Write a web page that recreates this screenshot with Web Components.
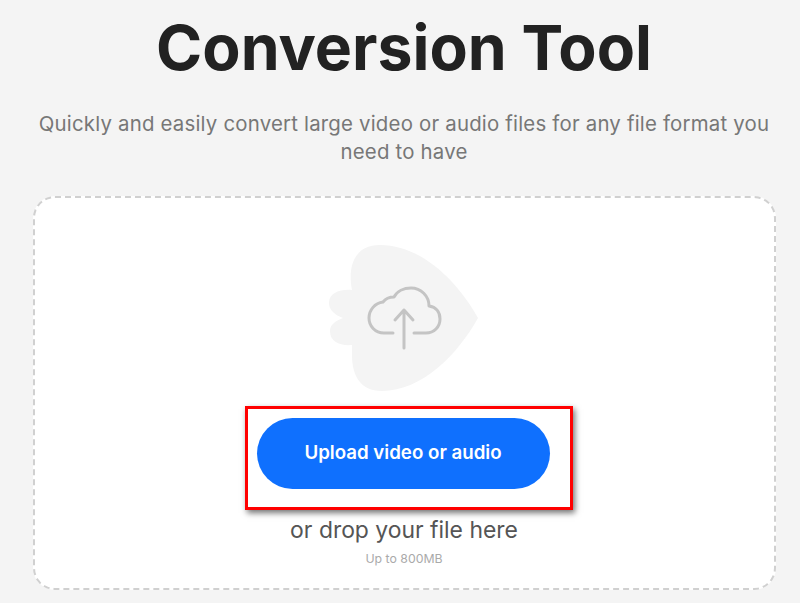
<!DOCTYPE html>
<html>
<head>
<meta charset="utf-8">
<style>
  html, body { margin: 0; height: 603px; overflow: hidden; background: #f4f4f4; }
  body { font-family: Inter, "Liberation Sans", sans-serif; }
</style>
</head>
<body>
<conversion-page>
  <page-heading title="Conversion Tool">Quickly and easily convert large video or audio files for any file format you need to have</page-heading>
  <drop-zone hint="or drop your file here" limit="Up to 800MB">
    <upload-art></upload-art>
    <upload-button>Upload video or audio</upload-button>
  </drop-zone>
</conversion-page>
<script>
class ConversionPage extends HTMLElement {
  constructor() {
    super();
    this.attachShadow({ mode: 'open' });
    this.shadowRoot.innerHTML = `
      <style>
        :host { display: flex; flex-direction: column; align-items: center; box-sizing: border-box; height: 603px; padding-left: 8px; overflow: hidden; }
      </style>
      <slot></slot>
    `;
  }
}

class PageHeading extends HTMLElement {
  constructor() {
    super();
    this.attachShadow({ mode: 'open' });
    this.shadowRoot.innerHTML = `
      <style>
        :host { display: block; width: 760px; text-align: center; }
        h1 { margin: 0; padding-top: 8px; font-size: 62.5px; line-height: 78px; font-weight: 700; color: #222; }
        p { margin: 24px 0 0; font-size: 20.4px; line-height: 28px; height: 86px; color: #777; letter-spacing: 0.2px; }
      </style>
      <h1></h1>
      <p><slot></slot></p>
    `;
    this.shadowRoot.querySelector('h1').textContent = this.getAttribute('title');
  }
}

class DropZone extends HTMLElement {
  constructor() {
    super();
    this.attachShadow({ mode: 'open' });
    this.shadowRoot.innerHTML = `
      <style>
        :host { display: flex; flex-direction: column; align-items: center; box-sizing: border-box; width: 743px; height: 394px; background: #fff; border: 2px dashed #d0d0d0; border-radius: 22px; padding-top: 32px; }
        .hint { margin-top: 7px; font-size: 22.9px; line-height: 27px; color: #555; }
        .limit { margin-top: 7px; font-size: 12.3px; line-height: 15px; color: #aaa; }
      </style>
      <slot></slot>
      <div class="hint"></div>
      <div class="limit"></div>
    `;
    this.shadowRoot.querySelector('.hint').textContent = this.getAttribute('hint');
    this.shadowRoot.querySelector('.limit').textContent = this.getAttribute('limit');
  }
}

class UploadArt extends HTMLElement {
  constructor() {
    super();
    this.attachShadow({ mode: 'open' });
    this.shadowRoot.innerHTML = `
      <style>
        :host { display: block; width: 190px; height: 176px; margin-left: 1px; }
        svg { display: block; }
      </style>
      <svg width="190" height="170" viewBox="0 0 190 170" fill="none">
        <path fill="#f4f4f4" d="M70,15 C112,15 148,52 168,88 C148,124 112,161 72,161 C50,161 42,145 42,125 L42,115 C30,116 20,112 20,101 C20,95 25,91 33,88 C25,85 19,80 19,73 C19,63 30,59 42,60 C38,40 42,15 70,15 Z"/>
        <path stroke="#c4c4c4" stroke-width="3" stroke-linecap="round" stroke-linejoin="round" d="M83,103 H74 C65,103 59,96 59,88 C59,80 65,73 73,72 C76,68 80,67 84,67 C87,61 94,58 101,58 C111,58 119,66 119,76 C126,77 130,82 130,89 C130,97 124,103 116,103 H104"/>
        <path stroke="#c4c4c4" stroke-width="3" stroke-linecap="round" stroke-linejoin="round" d="M94,118 V80 M85,90 L94,80 L103,90"/>
      </svg>
    `;
  }
}

class UploadButton extends HTMLElement {
  constructor() {
    super();
    this.attachShadow({ mode: 'open' });
    this.shadowRoot.innerHTML = `
      <style>
        :host { display: block; box-sizing: border-box; width: 328px; height: 104px; margin-left: 10px; padding: 9px 20px 0 9px; border: 3px solid #f00; box-shadow: 2px 3px 6px rgba(0,0,0,.55); }
        button { display: block; width: 293px; height: 71px; border: 0; border-radius: 36px; background: #0f70fe; color: #fff; font: 600 18.7px Inter, "Liberation Sans", sans-serif; padding: 0 1px 2px 0; }
      </style>
      <button><slot></slot></button>
    `;
  }
}

customElements.define('conversion-page', ConversionPage);
customElements.define('page-heading', PageHeading);
customElements.define('drop-zone', DropZone);
customElements.define('upload-art', UploadArt);
customElements.define('upload-button', UploadButton);
</script>
</body>
</html>
